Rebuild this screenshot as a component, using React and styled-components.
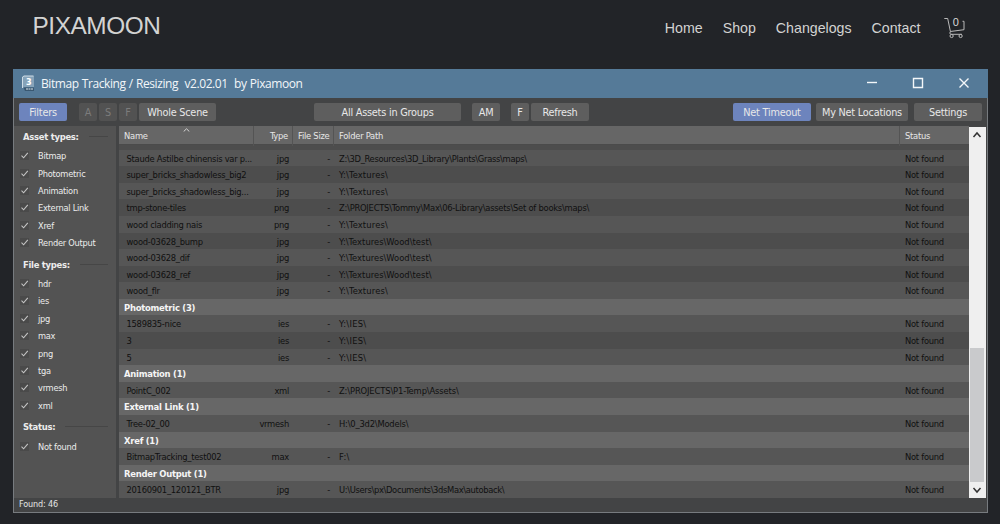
import React from "react";
import styled, { createGlobalStyle, css } from "styled-components";

const GlobalStyle = createGlobalStyle`
    * {
        box-sizing: border-box;
    }
    body {
        margin: 0;
        height: 524px;
        overflow: hidden;
        background: #222428;
        font-family: "DejaVu Sans Condensed", "DejaVu Sans", sans-serif;
    }
`;

const ui = css`
    font-family: "DejaVu Sans Condensed", "DejaVu Sans", sans-serif;
    font-stretch: condensed;
`;

const Page = styled.div`
    width: 1000px;
    height: 524px;
    padding-left: 13px;
`;

const SiteHeader = styled.header`
    height: 68.5px;
    padding: 0 34px 0 20px;
    display: flex;
    align-items: flex-start;
    color: #d3d3d2;
    font-family: "Liberation Sans", Arial, sans-serif;
`;

const Brand = styled.div`
    margin: 11px 0 0 -0.5px;
    font-size: 24.4px;
    line-height: 29px;
    letter-spacing: -0.45px;
`;

const Nav = styled.nav`
    margin: 19px 23.5px 0 auto;
    display: flex;
    gap: 20px;
    font-size: 14.2px;
    line-height: 18px;
`;

const Cart = styled.svg`
    margin-top: 16px;
    width: 22px;
    height: 24px;
    fill: none;
    stroke: #b9b9b9;
    stroke-width: 1;

    text {
        fill: #d8d8d8;
        stroke: none;
        font-size: 11px;
    }
`;

const Window = styled.main`
    width: 975px;
    height: 444px;
    display: flex;
    flex-direction: column;
    background: #434445;
    border: solid #777b7f;
    border-width: 0 1px 1px;
`;

const TitleBar = styled.div`
    flex: none;
    height: 29px;
    margin: 0 -1px;
    padding: 0 18.5px 0 8px;
    display: flex;
    align-items: center;
    background: #557a98;
    color: #f2f6f9;
`;

const Title = styled.h1`
    margin: 0 auto 0 6px;
    font: 400 12px/27px "Open Sans", "Noto Sans", sans-serif;
    letter-spacing: -0.42px;
    word-spacing: 0.5px;
    white-space: pre;
`;

const WindowControls = styled.div`
    display: flex;
    gap: 34px;

    svg {
        width: 12px;
        height: 12px;
        fill: none;
        stroke: #f4f7f9;
        stroke-width: 1.4;
    }
`;

const Toolbar = styled.div`
    flex: none;
    height: 28.5px;
    padding: 5.5px 4px 0 5px;
    display: flex;
    align-items: flex-start;
`;

const Button = styled.button`
    ${ui}
    flex: none;
    width: ${({ $width }) => $width}px;
    height: 18px;
    margin: 0 0 0 ${({ $gap = 0 }) => $gap}px;
    padding: 0;
    border: 0;
    border-radius: 2px;
    background: ${({ $active, $disabled }) =>
        $active ? "#6d84bd" : $disabled ? "#525252" : "#5e5e5e"};
    color: ${({ $disabled }) => ($disabled ? "#7c7c7c" : "#e8e8e8")};
    font-size: 10.8px;
    line-height: 19px;
    letter-spacing: -0.22px;
    white-space: nowrap;
`;

const Body = styled.div`
    flex: none;
    height: 372px;
    display: flex;
`;

const Sidebar = styled.aside`
    width: 102px;
    margin-right: 3px;
    padding: 2px 8px 0 6px;
    background: #535353;
    color: #ececec;
    font-size: 9.2px;
    letter-spacing: -0.25px;
`;

const FilterTitle = styled.h2`
    margin: 0 0 0 3px;
    height: 17px;
    display: flex;
    align-items: center;
    gap: 10px;
    font-size: 9.4px;
    font-weight: 700;
    letter-spacing: -0.27px;
    white-space: nowrap;

    &::after {
        content: "";
        flex: 1;
        height: 1px;
        background: #464646;
    }
`;

const FilterList = styled.div`
    padding: 2px 0 4.5px;
`;

const Filter = styled.label`
    height: 17.4px;
    display: flex;
    align-items: center;
    gap: 9px;
    white-space: nowrap;
`;

const Check = styled.svg`
    flex: none;
    width: 9px;
    height: 9px;
    background: #4a4a4a;
    fill: none;
    stroke: #c4c4c4;
    stroke-width: 1.1;
`;

const Table = styled.section`
    width: 850px;
    display: flex;
    flex-direction: column;
    overflow: hidden;
    font-size: 9.3px;
`;

const columns = css`
    display: grid;
    grid-template-columns: 135px 39px 41px 566px 69px;
`;

const TableHead = styled.div`
    ${columns}
    flex: none;
    height: 19px;
    background: #666;
    border-bottom: 1px solid #4b4b4b;
    color: #e6e6e6;
    line-height: 20px;
`;

const HeadCell = styled.div`
    position: relative;
    padding: 0 4px 0 5px;
    text-align: ${({ $right }) => ($right ? "right" : "left")};
    white-space: nowrap;
    border-right: 1px solid #545454;
    letter-spacing: -0.25px;

    &:last-child {
        border-right: 0;
    }
`;

const SortArrow = styled.svg`
    position: absolute;
    top: 2px;
    left: 64px;
    width: 7px;
    height: 4px;
    fill: none;
    stroke: #d5d5d5;
`;

const Rows = styled.div`
    flex: 1;
    min-height: 0;
    display: flex;
    flex-direction: column;
    justify-content: flex-end;
    background: #4d4d4d;
`;

const Row = styled.div`
    ${columns}
    flex: none;
    height: 16.6px;
    line-height: 17.6px;
    background: ${({ $dark }) => ($dark ? "#4d4d4d" : "#565656")};
    color: #101010;
    letter-spacing: -0.27px;
`;

const Cell = styled.div`
    padding: 0 4px 0 ${({ $first }) => ($first ? 7.5 : 5)}px;
    text-align: ${({ $right }) => ($right ? "right" : "left")};
    letter-spacing: ${({ $track = -0.27 }) => $track}px;
    white-space: nowrap;
    overflow: hidden;
`;

const GroupRow = styled.div`
    flex: none;
    height: 16.6px;
    padding-left: 5px;
    background: #676767;
    color: #f5f5f5;
    font-size: 9.4px;
    font-weight: 700;
    line-height: 17.6px;
    letter-spacing: -0.25px;
`;

const ScrollBar = styled.div`
    width: 17px;
    height: 371px;
    margin-top: 1px;
    padding: 0 2px 0 1px;
    display: flex;
    flex-direction: column;
    align-items: center;
    background: #efefef;

    svg {
        flex: none;
        width: 16px;
        height: 16px;
        fill: none;
        stroke: #333;
        stroke-width: 1.5;
    }
`;

const Thumb = styled.div`
    width: 14px;
    height: 134px;
    margin-top: auto;
    background: #c9cacc;
`;

const StatusBar = styled.footer`
    padding-left: 5px;
    color: #e4e4e4;
    font-size: 9px;
    line-height: 13px;
    letter-spacing: -0.15px;
`;

const assetTypes = ["Bitmap", "Photometric", "Animation", "External Link", "Xref", "Render Output"];
const fileTypes = ["hdr", "ies", "jpg", "max", "png", "tga", "vrmesh", "xml"];

const rows = [
    { name: "Staude Astilbe chinensis var p...", type: "jpg", path: "Z:\\3D_Resources\\3D_Library\\Plants\\Grass\\maps\\", track: -0.3 },
    { name: "super_bricks_shadowless_big2", type: "jpg", path: "Y:\\Textures\\", track: 0.15, dark: true },
    { name: "super_bricks_shadowless_big...", type: "jpg", path: "Y:\\Textures\\", track: 0.15 },
    { name: "tmp-stone-tiles", type: "png", path: "Z:\\PROJECTS\\Tommy\\Max\\06-Library\\assets\\Set of books\\maps\\", track: -0.24, dark: true },
    { name: "wood cladding nais", type: "png", path: "Y:\\Textures\\", track: 0.15 },
    { name: "wood-03628_bump", type: "jpg", path: "Y:\\Textures\\Wood\\test\\", track: 0.02, dark: true },
    { name: "wood-03628_dif", type: "jpg", path: "Y:\\Textures\\Wood\\test\\", track: 0.02 },
    { name: "wood-03628_ref", type: "jpg", path: "Y:\\Textures\\Wood\\test\\", track: 0.02, dark: true },
    { name: "wood_flr", type: "jpg", path: "Y:\\Textures\\", track: 0.15 },
    { group: "Photometric (3)" },
    { name: "1589835-nice", type: "ies", path: "Y:\\IES\\", track: 0.3 },
    { name: "3", type: "ies", path: "Y:\\IES\\", track: 0.3, dark: true },
    { name: "5", type: "ies", path: "Y:\\IES\\", track: 0.3 },
    { group: "Animation (1)" },
    { name: "PointC_002", type: "xml", path: "Z:\\PROJECTS\\P1-Temp\\Assets\\", track: -0.13 },
    { group: "External Link (1)" },
    { name: "Tree-02_00", type: "vrmesh", path: "H:\\0_3d2\\Models\\", track: -0.2 },
    { group: "Xref (1)" },
    { name: "BitmapTracking_test002", type: "max", path: "F:\\", track: 0.3 },
    { group: "Render Output (1)" },
    { name: "20160901_120121_BTR", type: "jpg", path: "U:\\Users\\px\\Documents\\3dsMax\\autoback\\", track: -0.34 },
];

const FilterGroup = ({ title, items }) => (
    <>
        <FilterTitle>{title}</FilterTitle>
        <FilterList>
            {items.map((item) => (
                <Filter key={item}>
                    <Check viewBox="0 0 9 9">
                        <path d="M1.5 4.7 3.6 6.8 7.8 1.8" />
                    </Check>
                    {item}
                </Filter>
            ))}
        </FilterList>
    </>
);

const AssetTable = () => (
    <Table>
        <TableHead>
            <HeadCell>
                Name
                <SortArrow viewBox="0 0 7 4">
                    <path d="M.7 3.5 3.5.8l2.8 2.7" />
                </SortArrow>
            </HeadCell>
            <HeadCell $right>Type</HeadCell>
            <HeadCell $right>File Size</HeadCell>
            <HeadCell>Folder Path</HeadCell>
            <HeadCell>Status</HeadCell>
        </TableHead>
        <Rows>
            {rows.map((row) =>
                row.group ? (
                    <GroupRow key={row.group}>{row.group}</GroupRow>
                ) : (
                    <Row key={row.name} $dark={row.dark}>
                        <Cell $first>{row.name}</Cell>
                        <Cell $right>{row.type}</Cell>
                        <Cell $right>-</Cell>
                        <Cell $track={row.track}>{row.path}</Cell>
                        <Cell>Not found</Cell>
                    </Row>
                )
            )}
        </Rows>
    </Table>
);

const App = () => (
    <Page>
        <GlobalStyle />
        <SiteHeader>
            <Brand>PIXAMOON</Brand>
            <Nav>
                <span>Home</span>
                <span>Shop</span>
                <span>Changelogs</span>
                <span>Contact</span>
            </Nav>
            <Cart viewBox="0 0 22 24">
                <path d="M.3 2.5H3.7L6.4 15.5 20 13.7V5.3H18.5M6.4 15.5Q4.8 18 7 18.3H18" />
                <circle cx="7.6" cy="20" r="1.6" />
                <circle cx="16.6" cy="20" r="1.6" />
                <text x="8.7" y="9.6">0</text>
            </Cart>
        </SiteHeader>
        <Window>
            <TitleBar>
                <svg width="14" height="17" viewBox="0 0 14 17">
                    <path d="M2.5 1H13v11H4L1.5 13V2z" fill="#86a3b9" />
                    <path d="M1.5 13V2L3 1h9.5" stroke="#cfdde7" fill="none" />
                    <path d="M2.5 12.5H13V16H4z" fill="#3a5871" />
                    <path d="M5 14h7" stroke="#dce6ed" strokeWidth="1.2" strokeDasharray="2 .5" />
                    <text x="5" y="9.5" fill="#fff" fontSize="9" fontWeight="700">3</text>
                </svg>
                <Title>Bitmap Tracking / Resizing  v2.02.01  by Pixamoon</Title>
                <WindowControls>
                    <svg viewBox="0 0 12 12"><path d="M1 5.5h10" /></svg>
                    <svg viewBox="0 0 12 12"><path d="M1.5 1.5h9v9h-9z" /></svg>
                    <svg viewBox="0 0 12 12"><path d="m1.5 1.5 9 9m0-9-9 9" /></svg>
                </WindowControls>
            </TitleBar>
            <Toolbar>
                <Button $width={48} $active>Filters</Button>
                <Button $width={18} $gap={12} $disabled>A</Button>
                <Button $width={18} $gap={2} $disabled>S</Button>
                <Button $width={18} $gap={2} $disabled>F</Button>
                <Button $width={77} $gap={2}>Whole Scene</Button>
                <Button $width={147} $gap={98}>All Assets in Groups</Button>
                <Button $width={28} $gap={11}>AM</Button>
                <Button $width={18} $gap={11}>F</Button>
                <Button $width={58} $gap={2}>Refresh</Button>
                <Button $width={78} $gap={144} $active>Net Timeout</Button>
                <Button $width={92} $gap={5}>My Net Locations</Button>
                <Button $width={68} $gap={6}>Settings</Button>
            </Toolbar>
            <Body>
                <Sidebar>
                    <FilterGroup title="Asset types:" items={assetTypes} />
                    <FilterGroup title="File types:" items={fileTypes} />
                    <FilterGroup title="Status:" items={["Not found"]} />
                </Sidebar>
                <AssetTable />
                <ScrollBar>
                    <svg viewBox="0 0 16 16"><path d="m4.5 10 3.5-4 3.5 4" /></svg>
                    <Thumb />
                    <svg viewBox="0 0 16 16"><path d="m4.5 6 3.5 4 3.5-4" /></svg>
                </ScrollBar>
            </Body>
            <StatusBar>Found: 46</StatusBar>
        </Window>
    </Page>
);

export default App;
